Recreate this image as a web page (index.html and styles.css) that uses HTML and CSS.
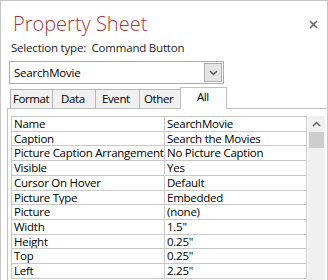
FILE: index.html
```html
<!DOCTYPE html>
<html lang="en">
<head>
  <meta charset="UTF-8">
  <meta name="viewport" content="width=device-width, initial-scale=1.0">
  <title>Property Sheet</title>
  <link rel="stylesheet" href="styles.css">
</head>
<body>
  <div class="sheet">
    <div class="header">
      <h1 class="title">Property Sheet</h1>
      <span class="close">
        <svg width="9" height="9" viewBox="0 0 9 9"><path d="M1 1 L8 8 M8 1 L1 8" stroke="#666" stroke-width="1.6"/></svg>
      </span>
    </div>
    <div class="seltype">Selection type:&nbsp; Command Button</div>

    <div class="combo">
      <span class="combo-text">SearchMovie</span>
      <span class="combo-btn">
        <svg width="9" height="6" viewBox="0 0 9 6"><path d="M1 1 L4.5 4.5 L8 1" fill="none" stroke="#555" stroke-width="1.5"/></svg>
      </span>
    </div>

    <div class="tabs">
      <span class="tab tab-format">Format</span>
      <span class="tab tab-data">Data</span>
      <span class="tab tab-event">Event</span>
      <span class="tab tab-other">Other</span>
      <span class="tab active">All</span>
    </div>

    <div class="panel">
      <div class="grid">
        <div class="row"><span class="name">Name</span><span class="value">SearchMovie</span></div>
        <div class="row"><span class="name">Caption</span><span class="value">Search the Movies</span></div>
        <div class="row"><span class="name">Picture Caption Arrangement</span><span class="value">No Picture Caption</span></div>
        <div class="row"><span class="name">Visible</span><span class="value">Yes</span></div>
        <div class="row"><span class="name">Cursor On Hover</span><span class="value">Default</span></div>
        <div class="row"><span class="name">Picture Type</span><span class="value">Embedded</span></div>
        <div class="row"><span class="name">Picture</span><span class="value">(none)</span></div>
        <div class="row"><span class="name">Width</span><span class="value">1.5"</span></div>
        <div class="row"><span class="name">Height</span><span class="value">0.25"</span></div>
        <div class="row"><span class="name">Top</span><span class="value">0.25"</span></div>
        <div class="row"><span class="name">Left</span><span class="value">2.25"</span></div>
      </div>
      <div class="scrollbar">
        <span class="arrow">
          <svg width="9" height="6" viewBox="0 0 9 6"><path d="M1 5 L4.5 1.5 L8 5" fill="none" stroke="#606060" stroke-width="1.5"/></svg>
        </span>
        <span class="thumb"></span>
      </div>
    </div>
  </div>
</body>
</html>
```

FILE: styles.css
```css
body {
  margin: 0;
  width: 328px;
  height: 280px;
  overflow: hidden;
  background-color: #fff;
  font-family: "Open Sans", "Noto Sans", Arial, sans-serif;
  color: #000;
}

.sheet {
  box-sizing: border-box;
  width: 328px;
  height: 280px;
  border: 1px solid #c6c6c6;
  border-bottom: none;
  overflow: hidden;
}

.header {
  display: flex;
  justify-content: space-between;
  align-items: flex-start;
  height: 38px;
}

.title {
  margin: 9px 0 0 12px;
  font-size: 20px;
  font-weight: 300;
  line-height: 28px;
  color: #a4373a;
}

.close {
  margin: 19px 9px 0 0;
  line-height: 0;
}

.seltype {
  margin-left: 10px;
  font-size: 11.5px;
  letter-spacing: -0.2px;
  line-height: 17px;
  color: #222;
}

.combo {
  display: flex;
  justify-content: space-between;
  align-items: center;
  box-sizing: border-box;
  width: 215px;
  height: 23px;
  margin: 5px 0 0 8px;
  padding: 0 1px 0 4px;
  border: 1px solid #acacac;
  font-size: 11.5px;
  letter-spacing: -0.2px;
}

.combo-btn {
  display: flex;
  justify-content: center;
  align-items: center;
  box-sizing: border-box;
  width: 18px;
  height: 19px;
  background-color: #e5e5e5;
  border: 1px solid #adadad;
}

.tabs {
  display: flex;
  align-items: flex-end;
  height: 24px;
  margin-left: 9px;
}

.tab {
  box-sizing: border-box;
  height: 19px;
  padding-left: 2px;
  font-size: 11.5px;
  letter-spacing: -0.4px;
  line-height: 17px;
  background-color: #f0f0f0;
  border: 1px solid #b5b5b5;
  border-bottom: none;
  margin-right: -1px;
}

.tab-format { width: 43px; }
.tab-data { width: 44px; padding-left: 8px; }
.tab-event { width: 45px; padding-left: 6px; }
.tab-other { width: 42px; padding-left: 4px; }

.tab.active {
  position: relative;
  z-index: 1;
  width: 47px;
  height: 22px;
  margin-bottom: -1px;
  padding-left: 16px;
  line-height: 18px;
  background-color: #fff;
  border-color: #c0c0c0;
}

.panel {
  display: flex;
  align-items: flex-start;
  margin-left: 6px;
  padding: 7px 0 0 3px;
  border-top: 1px solid #c0c0c0;
  border-left: 1px solid #c0c0c0;
}

.grid {
  width: 294px;
  border: 1px solid #c8c8c8;
  border-bottom: none;
}

.row {
  display: flex;
  box-sizing: border-box;
  height: 14.73px;
  border-bottom: 1px solid #c8c8c8;
  font-size: 11.5px;
  letter-spacing: -0.25px;
  line-height: 13.5px;
}

.name {
  box-sizing: border-box;
  width: 153px;
  padding-left: 2px;
  border-right: 1px solid #c8c8c8;
  white-space: nowrap;
  overflow: hidden;
}

.value {
  padding-left: 2px;
  white-space: nowrap;
}

.scrollbar {
  display: flex;
  flex-direction: column;
  align-items: center;
  width: 17px;
  height: 180px;
  margin-left: 1px;
  background-color: #f0f0f0;
}

.arrow {
  height: 16px;
  display: flex;
  align-items: center;
  line-height: 0;
}

.thumb {
  width: 15px;
  height: 16px;
  background-color: #cdcdcd;
}
```
